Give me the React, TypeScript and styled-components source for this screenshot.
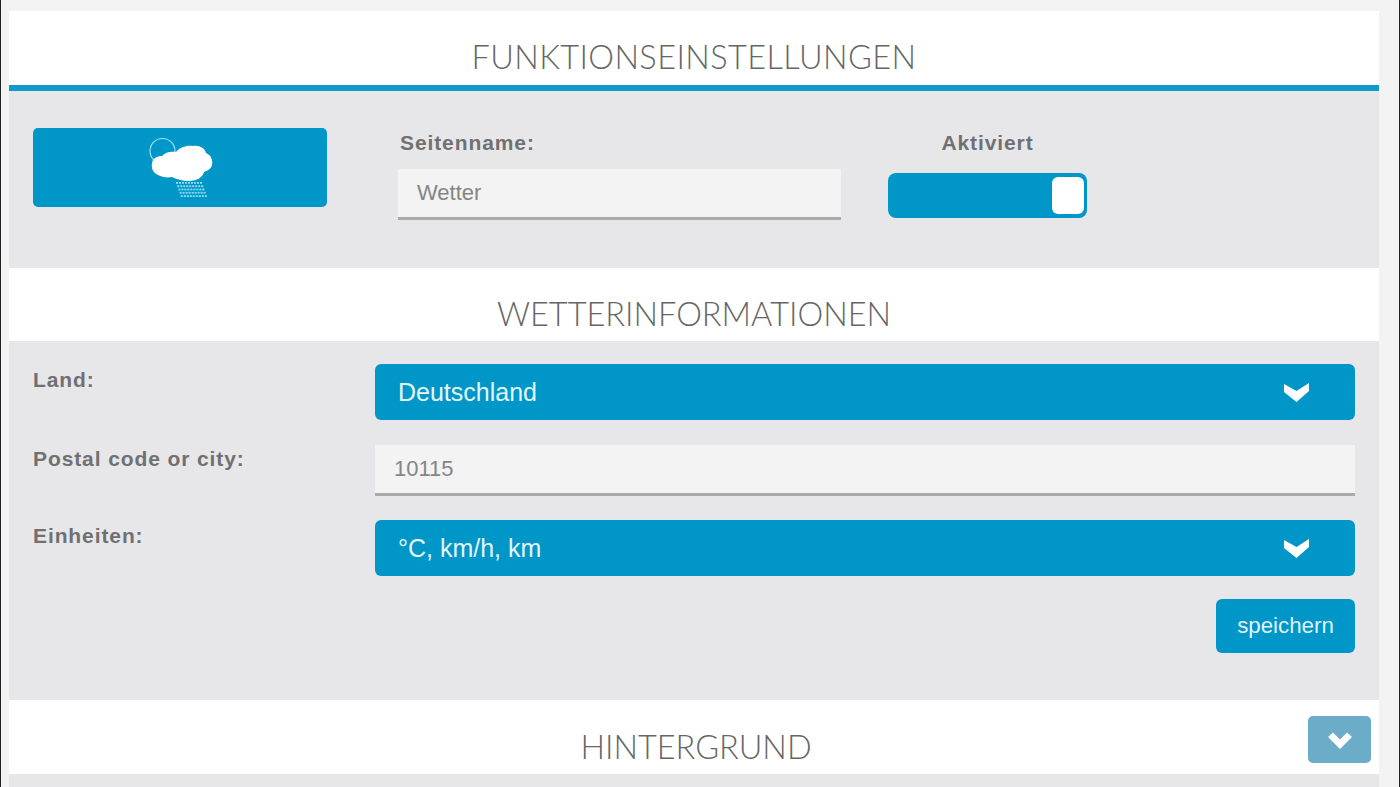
import React from "react";
import styled, { createGlobalStyle } from "styled-components";

const Global = createGlobalStyle`
  html, body { margin: 0; padding: 0; background: #f3f3f3; }
  body { font-family: "Liberation Sans", Arial, sans-serif; }
`;

const Page = styled.div`
  width: 1400px;
  height: 787px;
  box-sizing: border-box;
  overflow: hidden;
  padding: 11px 20px 0 8px;
  background: #f3f3f3;
  border-left: 1px solid #222;
  border-right: 1px solid #222;
`;

const Header = styled.header<{ $h: number; $rule?: boolean }>`
  position: relative;
  height: ${(p) => p.$h}px;
  box-sizing: border-box;
  background: #fff;
  display: flex;
  align-items: flex-end;
  justify-content: center;
  border-bottom: ${(p) => (p.$rule ? "6px solid #0f9acb" : "none")};
`;

const Title = styled.h2<{ $pb: number; $dx?: number; $ls?: number }>`
  margin: 0 0 ${(p) => p.$pb}px ${(p) => p.$dx ?? 0}px;
  font-family: Lato, "Liberation Sans", sans-serif;
  font-weight: 300;
  font-size: 32.5px;
  line-height: 40px;
  letter-spacing: ${(p) => p.$ls ?? 0}px;
  color: #666;
`;

const Section = styled.section<{ $h: number }>`
  height: ${(p) => p.$h}px;
  box-sizing: border-box;
  background: #e7e7e9;
`;

const FunctionRow = styled.div`
  display: flex;
  align-items: flex-start;
  padding: 37px 24px 0;
`;

const IconTile = styled.div`
  width: 294px;
  height: 79px;
  border-radius: 5px;
  background: #0096c8;
  display: flex;
  align-items: center;
  justify-content: center;
`;

const NameColumn = styled.div`
  width: 443px;
  margin-left: 71px;
  padding-top: 3px;
`;

const ToggleColumn = styled.div`
  width: 199px;
  margin-left: 47px;
  padding-top: 3px;
  display: flex;
  flex-direction: column;
  align-items: center;
`;

const FieldLabel = styled.div<{ $indent?: number; $gap?: number }>`
  font-size: 21px;
  line-height: 24px;
  font-weight: 700;
  letter-spacing: 0.9px;
  color: #707072;
  margin-left: ${(p) => p.$indent ?? 0}px;
  margin-bottom: ${(p) => p.$gap ?? 0}px;
`;

const TextField = styled.div<{ $pad: number }>`
  height: 51px;
  box-sizing: border-box;
  background: #f3f3f3;
  border-bottom: 3px solid #aaaaaa;
  padding-left: ${(p) => p.$pad}px;
  display: flex;
  align-items: center;
  font-size: 22px;
  color: #858585;
`;

const Toggle = styled.div`
  width: 199px;
  height: 45px;
  box-sizing: border-box;
  border-radius: 8px;
  background: #0096c8;
  padding: 4px 3px;
  display: flex;
  justify-content: flex-end;
`;

const Knob = styled.div`
  width: 32px;
  height: 37px;
  border-radius: 6px;
  background: #fff;
`;

const WeatherGrid = styled.div`
  display: grid;
  grid-template-columns: 342px 980px;
  padding: 23px 24px 0;
  align-items: start;
`;

const RowLabel = styled.div<{ $pt: number }>`
  padding-top: ${(p) => p.$pt}px;
`;

const Select = styled.div<{ $mb: number }>`
  height: 56px;
  box-sizing: border-box;
  margin-bottom: ${(p) => p.$mb}px;
  border-radius: 6px;
  background: #0096c8;
  color: #e4f6fb;
  font-size: 25px;
  padding: 0 46px 0 23px;
  display: flex;
  align-items: center;
  justify-content: space-between;
`;

const FieldWrap = styled.div`
  margin-bottom: 24px;
`;

const ActionRow = styled.div`
  grid-column: 2;
  display: flex;
  justify-content: flex-end;
`;

const SaveButton = styled.button`
  width: 139px;
  height: 54px;
  border: 0;
  border-radius: 6px;
  background: #0096c8;
  color: #dff4fa;
  font-family: "Liberation Sans", Arial, sans-serif;
  font-size: 22.3px;
  padding: 0;
`;

const CollapseButton = styled.button`
  position: absolute;
  right: 8px;
  top: 16px;
  width: 63px;
  height: 47px;
  padding: 0;
  border: 0;
  border-radius: 5px;
  background: #6bacc8;
  display: flex;
  align-items: center;
  justify-content: center;
`;

const SelectChevron = () => (
  <svg width="25" height="19" viewBox="0 0 25 19" aria-hidden="true">
    <path d="M0 1 L12.5 8 L25 0 L25 8 L12.5 19 L0 9 Z" fill="#fff" />
  </svg>
);

const CollapseChevron = () => (
  <svg width="26" height="20" viewBox="0 0 26 20" aria-hidden="true">
    <path d="M1 7 L6 2.5 L13 9.5 L20 2.5 L25 7 L13 19 Z" fill="#fff" />
  </svg>
);

const WeatherIcon = () => (
  <svg width="70" height="72" viewBox="0 0 70 72" aria-hidden="true">
    <circle cx="17.5" cy="19" r="12.5" fill="none" stroke="#9fe3f5" strokeWidth="1.2" />
    <path
      d="M13 43 C8 41 6 36 7 31 C8 26 12 24 17 24 C20 20 26 19 31 20 C35 15 42 13 48 14 C54 13 60 16 61 21 C66 23 68 28 67 33 C66 37 62 39 59 40 C58 45 52 49 44 49 C37 49 31 47 27 45 C22 46 17 45 13 43 Z"
      fill="#fff"
    />
    {[0, 1, 2, 3, 4].map((row) =>
      Array.from({ length: 9 }).map((_, i) => (
        <rect
          key={`${row}-${i}`}
          x={31 + i * 3 + row * 1.2}
          y={50 + row * 3.3}
          width="2"
          height="1.8"
          fill="#8fdcf0"
        />
      ))
    )}
  </svg>
);

export default function App() {
  return (
    <Page>
      <Global />
      <Header $h={80} $rule>
        <Title $pb={8} $ls={0.4}>FUNKTIONSEINSTELLUNGEN</Title>
      </Header>
      <Section $h={177}>
        <FunctionRow>
          <IconTile>
            <WeatherIcon />
          </IconTile>
          <NameColumn>
            <FieldLabel $indent={2} $gap={14}>Seitenname:</FieldLabel>
            <TextField $pad={19}>Wetter</TextField>
          </NameColumn>
          <ToggleColumn>
            <FieldLabel $gap={18}>Aktiviert</FieldLabel>
            <Toggle>
              <Knob />
            </Toggle>
          </ToggleColumn>
        </FunctionRow>
      </Section>
      <Header $h={73}>
        <Title $pb={7}>WETTERINFORMATIONEN</Title>
      </Header>
      <Section $h={359}>
        <WeatherGrid>
          <RowLabel $pt={4}>
            <FieldLabel>Land:</FieldLabel>
          </RowLabel>
          <Select $mb={25}>
            Deutschland
            <SelectChevron />
          </Select>
          <RowLabel $pt={2}>
            <FieldLabel>Postal code or city:</FieldLabel>
          </RowLabel>
          <FieldWrap>
            <TextField $pad={19}>10115</TextField>
          </FieldWrap>
          <RowLabel $pt={4}>
            <FieldLabel>Einheiten:</FieldLabel>
          </RowLabel>
          <Select $mb={23}>
            °C, km/h, km
            <SelectChevron />
          </Select>
          <ActionRow>
            <SaveButton>speichern</SaveButton>
          </ActionRow>
        </WeatherGrid>
      </Section>
      <Header $h={74}>
        <Title $pb={7} $dx={4}>HINTERGRUND</Title>
        <CollapseButton>
          <CollapseChevron />
        </CollapseButton>
      </Header>
      <Section $h={40} />
    </Page>
  );
}
